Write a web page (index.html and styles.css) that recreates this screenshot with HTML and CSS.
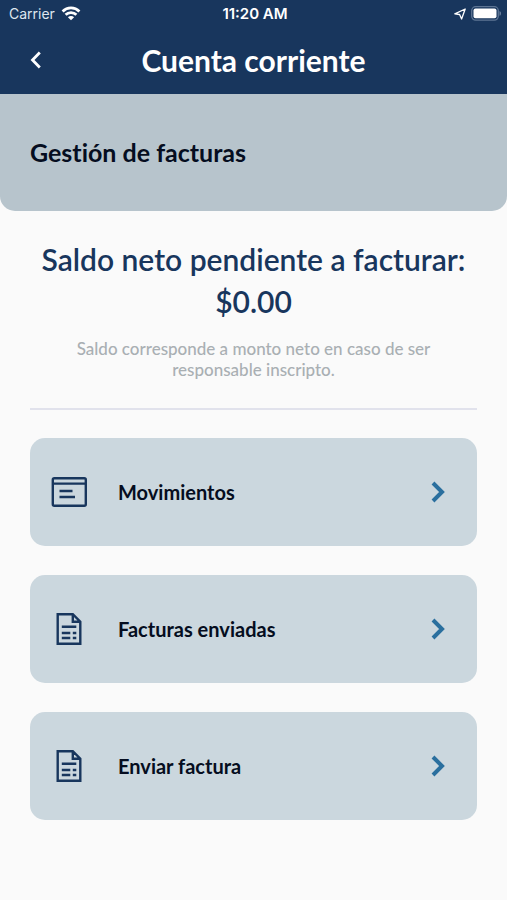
FILE: index.html
```html
<!DOCTYPE html>
<html lang="es">
<head>
<meta charset="utf-8">
<meta name="viewport" content="width=device-width, initial-scale=1">
<title>Cuenta corriente</title>
<link rel="stylesheet" href="styles.css">
</head>
<body>
<header class="top">
  <div class="status">
    <span class="carrier">Carrier
      <svg width="20" height="15" viewBox="0 0 20 15" fill="none" stroke="currentColor" stroke-width="2.8" aria-hidden="true"><path d="M1.6 5.4a12 12 0 0 1 16.8 0M4.6 8.8a7.7 7.7 0 0 1 10.8 0"/><path d="M10 14.2 6.9 11.200a4.4 4.4 0 0 1 6.2 0z" fill="currentColor" stroke="none"/></svg>
    </span>
    <span class="time">11:20 AM</span>
    <span class="indicators">
      <svg width="12" height="12" viewBox="0 0 12 12" fill="none" stroke="currentColor" stroke-width="1.3" stroke-linejoin="round" aria-hidden="true"><path d="M11.200 1 .8 5.800l4.800.700L7.600 11z"/></svg>
      <svg width="30" height="15" viewBox="0 0 30 15" aria-hidden="true"><rect x=".7" y=".7" width="26.6" height="13.4" rx="4" fill="none" stroke="#5d7594" stroke-width="1.3"/><rect x="2.5" y="2.5" width="23" height="9.8" rx="2" fill="#fff"/><path d="M28.5 5v4.8c1-.4 1.5-1.3 1.5-2.4S29.5 5.400 28.500 5z" fill="#6b819f"/></svg>
    </span>
  </div>
  <div class="nav">
    <button class="back" type="button" aria-label="Volver"><svg width="12" height="18" viewBox="0 0 12 18" fill="none" stroke="currentColor" stroke-width="2.8" aria-hidden="true"><path d="m9.8 1.500-7.300 7.500 7.300 7.500"/></svg></button>
    <h1>Cuenta corriente</h1>
  </div>
</header>
<section class="banner"><h2>Gestión de facturas</h2></section>
<main>
  <section class="balance">
    <p class="amount">Saldo neto pendiente a facturar: $0.00</p>
    <p class="note">Saldo corresponde a monto neto en caso de ser responsable inscripto.</p>
  </section>
  <nav class="menu">
    <a href="#movimientos">
      <span class="icon"><svg width="36" height="30" viewBox="0 0 36 30" fill="none" stroke="currentColor" stroke-width="2.4" aria-hidden="true"><rect x="1.8" y="1.2" width="33" height="27.600" rx="1.500"/><path d="M1.800 6.600h33M8.500 14h13M8.500 20h15.500"/></svg></span>
      <span class="label">Movimientos</span>
      <svg class="chevron" width="14" height="22" viewBox="0 0 14 22" aria-hidden="true"><path d="m2 2 9 9-9 9"/></svg>
    </a>
    <a href="#enviadas">
      <span class="icon"><svg width="26" height="32" viewBox="0 0 26 32" fill="none" stroke="currentColor" stroke-width="2.400" aria-hidden="true"><path d="M1.700 1.200h15.100l7.500 7.500v22.100H1.700zM16.800 1.200v7.500h7.500M5.800 13.800h14.500M5.800 20h8.500M5.800 25h8.500M16.800 20h3.500M16.800 25h3.500"/></svg></span>
      <span class="label">Facturas enviadas</span>
      <svg class="chevron" width="14" height="22" viewBox="0 0 14 22" aria-hidden="true"><path d="m2 2 9 9-9 9"/></svg>
    </a>
    <a href="#enviar">
      <span class="icon"><svg width="26" height="32" viewBox="0 0 26 32" fill="none" stroke="currentColor" stroke-width="2.400" aria-hidden="true"><path d="M1.700 1.200h15.100l7.500 7.500v22.100H1.700zM16.800 1.200v7.500h7.500M5.800 13.800h14.500M5.800 20h8.500M5.800 25h8.500M16.800 20h3.500M16.800 25h3.500"/></svg></span>
      <span class="label">Enviar factura</span>
      <svg class="chevron" width="14" height="22" viewBox="0 0 14 22" aria-hidden="true"><path d="m2 2 9 9-9 9"/></svg>
    </a>
  </nav>
</main>
</body>
</html>
```
FILE: styles.css
```css
* { box-sizing: border-box; }
body {
  margin: 0;
  min-height: 100vh;
  background: #fafafa;
  color: #050d20;
  font-family: Lato, sans-serif;
  font-variant-ligatures: none;
}
h1, h2, p { margin: 0; }
svg { display: block; flex: none; }

.top { padding-bottom: 2px; background: #18365d; color: #fff; }
.status {
  display: grid;
  grid-template-columns: 1fr auto 1fr;
  align-items: center;
  height: 27px;
  padding: 0 6px 0 9px;
  font: 14px/27px Inter, sans-serif;
}
.carrier { display: flex; align-items: center; gap: 6px; color: #dfe6ef; }
.carrier svg { color: #fff; }
.time { font-size: 15px; font-weight: 600; }
.indicators { display: flex; align-items: center; justify-content: flex-end; gap: 5px; }

.nav {
  display: grid;
  grid-template-columns: 72px 1fr 72px;
  align-items: center;
  height: 65px;
}
.back {
  display: flex;
  justify-content: center;
  padding: 12px;
  border: 0;
  background: none;
  color: #fff;
}
h1 { text-align: center; font-size: 30px; line-height: 38px; font-weight: 700; }

.banner {
  padding: 42px 30px 43px;
  border-radius: 0 0 15px 15px;
  background: #b7c4cc;
}
h2 { font-size: 25px; line-height: 32px; font-weight: 700; }

main { padding: 27px 30px; }
.balance {
  padding-bottom: 28px;
  border-bottom: 2px solid #e1e2ec;
  text-align: center;
}
.amount { color: #18365d; font-size: 30px; line-height: 42px; font-weight: 600; }
.note {
  padding: 0 30px;
  margin-top: 16px;
  color: #a9afb3;
  font-size: 17px;
  line-height: 21px;
  font-weight: 500;
}
.menu { display: grid; gap: 29px; margin-top: 28px; }
.menu a {
  display: flex;
  align-items: center;
  min-height: 108px;
  padding: 0 32px 0 21px;
  border-radius: 15px;
  background: #cbd7de;
  color: inherit;
  text-decoration: none;
}
.icon { display: flex; justify-content: center; width: 36px; color: #18365d; }
.label { flex: 1; margin-left: 31px; font-size: 20px; line-height: 28px; font-weight: 700; }
.chevron { fill: none; stroke: #2a6f9e; stroke-width: 4; }
```
